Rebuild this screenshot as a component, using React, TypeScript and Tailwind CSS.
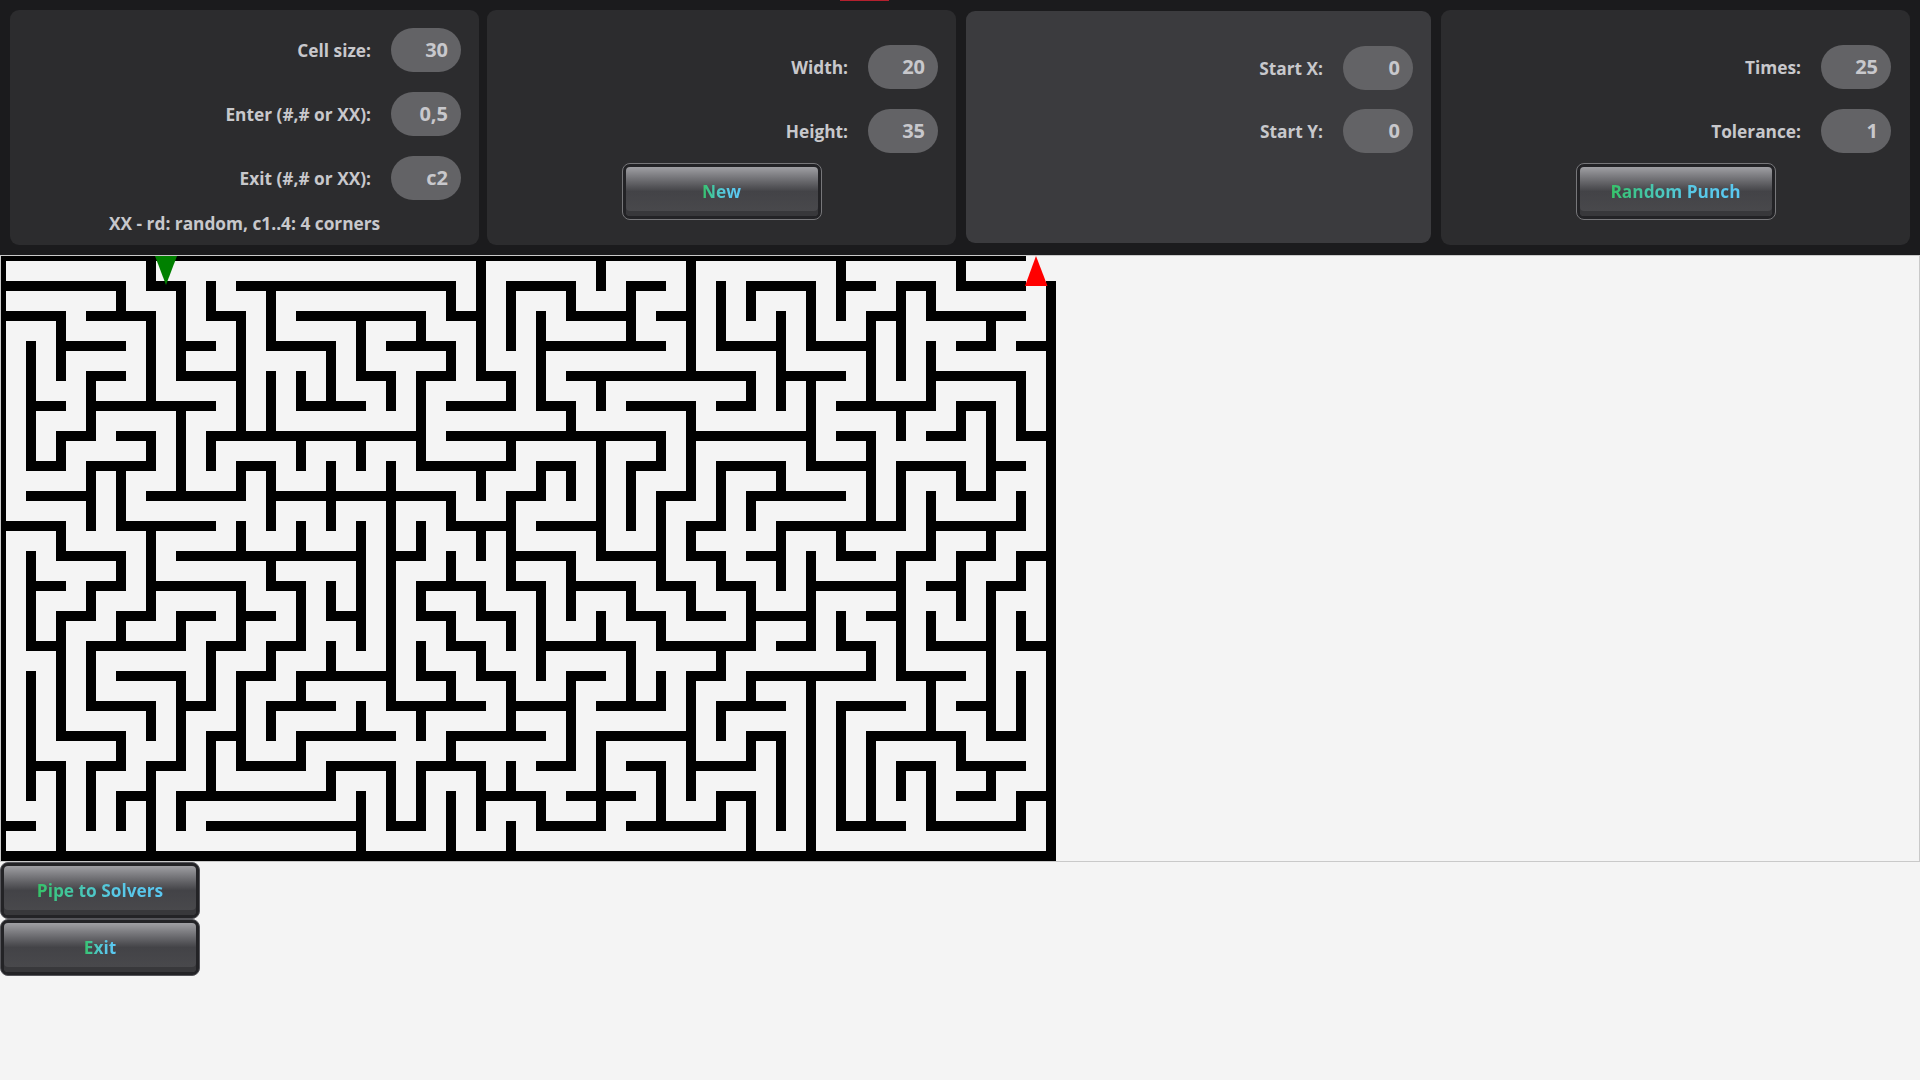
const H: Record<number, string> = {
  0: '0-34',
  1: '0-4 5-6 8-15 17-19 21-22 25-27 28-29 30-31 32-34',
  2: '0-2 3-5 7-8 10-14 15-16 19-21 22-23 29-30 31-34',
  3: '2-4 6-7 9-11 13-15 18-22 24-26 27-29 32-33 34-35',
  4: '3-4 6-8 12-13 14-15 16-17 19-25 26-28 31-34',
  5: '1-2 3-7 10-12 15-17 18-19 21-23 24-25 28-31 32-33',
  6: '2-3 4-5 7-14 15-22 23-27 28-29 31-32 34-35',
  7: '1-2 3-5 8-9 14-17 18-19 21-22 24-26 27-29 30-32 33-34',
  8: '1-3 5-8 9-15 17-18 22-23 25-28 32-33',
  9: '0-2 4-7 15-17 18-20 23-24 26-30 31-34',
  10: '2-4 6-12 13-14 17-19 20-22 23-24 25-26 28-29 30-31 32-33 34-35',
  11: '1-2 3-4 5-8 9-10 14-16 17-18 19-21 22-23 24-25 27-30 31-32 33-34',
  12: '2-3 4-5 6-7 8-9 11-12 14-15 16-17 21-22 23-24 25-27 29-30',
  13: '1-2 3-6 7-8 9-10 15-16 18-21 22-25 26-27 28-29 31-33 34-35',
  14: '4-6 8-9 10-13 14-15 16-17 19-20 23-24 25-29 30-32',
  15: '3-5 6-7 9-11 13-16 17-19 20-22 24-26 28-30 32-33',
  16: '2-4 7-8 10-13 15-18 20-23 25-26 29-32 33-34',
  17: '1-2 3-4 5-6 8-10 11-13 14-16 18-19 21-22 23-25 30-31 32-34',
  18: '4-5 6-11 16-18 19-21 24-25 32-33 34-35',
  19: '0-1 7-12 13-14 18-20 21-24 28-30 31-34',
  20: '0-35',
};

const V: Record<number, string> = {
  0: '0-20',
  1: '3-7 10-13 14-18',
  2: '2-4 6-7 9-10 12-16 17-20',
  3: '4-6 7-9 11-12 13-15 17-19',
  4: '1-2 7-9 10-11 12-13 16-17 18-19',
  5: '0-1 2-5 6-7 9-12 15-16 17-20',
  6: '1-4 5-8 12-13 14-17 18-19',
  7: '1-2 6-7 13-15 16-18',
  8: '2-6 7-8 9-10 11-13 14-17',
  9: '1-3 4-6 7-9 10-11 13-14 15-16',
  10: '4-5 6-7 9-10 11-13 14-15 16-17',
  11: '3-5 7-9 11-12 13-14 17-18',
  12: '2-4 6-7 9-13 15-16 18-20',
  13: '4-5 7-15 17-19',
  14: '2-3 4-7 9-10 11-12 13-14 15-16 17-19',
  15: '1-2 3-4 8-9 10-11 12-13 14-15 16-17 18-20',
  16: '0-4 7-8 9-10 11-12 13-14 17-19',
  17: '1-3 4-5 6-7 8-11 12-13 14-16 17-18 19-20',
  18: '2-5 7-8 11-14 18-19',
  19: '1-2 5-6 7-8 10-12 14-17',
  20: '0-1 4-5 6-10 12-13 16-19',
  21: '1-3 7-9 11-12 13-15',
  22: '6-7 8-11 12-13 14-15 17-19',
  23: '0-4 5-8 9-10 11-12 14-18',
  24: '1-3 7-9 10-11 13-14 15-16 18-19',
  25: '1-2 4-5 8-9 11-13 14-15 16-17 18-20',
  26: '2-5 7-8 9-11 16-19',
  27: '1-3 4-7 10-13 14-20',
  28: '0-2 9-10 12-13 15-19',
  29: '2-5 6-9 13-14 16-19',
  30: '1-4 5-6 7-9 10-14 17-18',
  31: '1-2 3-5 8-10 12-13 14-16 17-19',
  32: '0-1 5-6 7-8 10-12 16-17',
  33: '2-3 5-8 9-10 11-16 17-18',
  34: '4-6 8-9 10-11 12-13 14-16 18-19',
  35: '1-20',
};

const CELL = 30;

const spans = (list: string) => list.split(' ').map((s) => s.split('-').map(Number));

function Maze() {
  return (
    <svg width={1055} height={605} className="block">
      <g stroke="#000" strokeWidth={10} strokeLinecap="square">
        {Object.entries(H).flatMap(([row, list]) =>
          spans(list).map(([a, b]) => (
            <line key={`h${row}-${a}`} x1={a * CELL} x2={b * CELL} y1={+row * CELL} y2={+row * CELL} />
          ))
        )}
        {Object.entries(V).flatMap(([col, list]) =>
          spans(list).map(([a, b]) => (
            <line key={`v${col}-${a}`} x1={+col * CELL} x2={+col * CELL} y1={a * CELL} y2={b * CELL} />
          ))
        )}
      </g>
      <polygon points="154,0 176,0 165,29" fill="#008000" />
      <polygon points="1024,30 1046.5,30 1035,0" fill="#ff0000" />
    </svg>
  );
}

function Field({ label, value }: { label: string; value: string }) {
  return (
    <div className="flex items-center justify-end gap-[20px]">
      <span className="pt-[2px] text-[17.3px] font-bold text-[#c8c8cc]">{label}</span>
      <div className="flex h-[44px] w-[70px] items-center justify-end rounded-[22px] bg-[#636366] pr-[13px] text-[20px] font-bold text-[#c8c8cc]">
        {value}
      </div>
    </div>
  );
}

function GlossButton({ label, light }: { label: string; light?: boolean }) {
  return (
    <button
      className={`block h-[57px] w-[200px] rounded-[8px] border bg-[#232326] p-[3px] ${
        light ? 'border-[#77777a]' : 'border-[#55555a]'
      }`}
    >
      <span className="flex h-full w-full items-center justify-center rounded-[4px] bg-gradient-to-b from-[#a0a0a4] via-[#434347] via-50% to-[#4a4a4d] shadow-[inset_0_-5px_0_#38383b]">
        <span className="bg-gradient-to-r from-[#36c266] via-[#58c8e4] via-60% to-[#5ac8f2] bg-clip-text text-[17.3px] font-bold text-transparent">
          {label}
        </span>
      </span>
    </button>
  );
}

export default function App() {
  return (
    <div className="flex h-[1080px] w-[1920px] flex-col overflow-hidden bg-[#f4f4f4] font-['Open_Sans',sans-serif]">
      <div className="relative flex h-[255px] bg-[#1b1b1d] pl-[10px] pt-[10px]">
        <div className="absolute left-[840px] top-0 h-[1px] w-[49px] bg-[#b4202e]" />

        <div className="flex h-[235px] w-[469px] flex-col rounded-[9px] bg-[#2c2c2e] pr-[18px] pt-[18px]">
          <div className="flex flex-col gap-[20px]">
            <Field label="Cell size:" value="30" />
            <Field label="Enter (#,# or XX):" value="0,5" />
            <Field label="Exit (#,# or XX):" value="c2" />
          </div>
          <div className="mt-[13px] pl-[99px] text-[17.3px] font-bold leading-[22px] text-[#c8c8cc]">
            XX - rd: random, c1..4: 4 corners
          </div>
        </div>

        <div className="ml-[8px] flex h-[235px] w-[469px] flex-col rounded-[9px] bg-[#2c2c2e] pr-[18px] pt-[35px]">
          <div className="flex flex-col gap-[20px]">
            <Field label="Width:" value="20" />
            <Field label="Height:" value="35" />
          </div>
          <div className="mt-[10px] flex justify-center pl-[18px]">
            <GlossButton label="New" light />
          </div>
        </div>

        <div className="ml-[10px] mt-[1px] flex h-[232px] w-[465px] flex-col rounded-[9px] bg-[#3b3b3e] pr-[18px] pt-[35px]">
          <div className="flex flex-col gap-[19px]">
            <Field label="Start X:" value="0" />
            <Field label="Start Y:" value="0" />
          </div>
        </div>

        <div className="ml-[10px] flex h-[235px] w-[469px] flex-col rounded-[9px] bg-[#2c2c2e] pr-[19px] pt-[35px]">
          <div className="flex flex-col gap-[20px]">
            <Field label="Times:" value="25" />
            <Field label="Tolerance:" value="1" />
          </div>
          <div className="mt-[10px] flex justify-center pl-[19px]">
            <GlossButton label="Random Punch" light />
          </div>
        </div>
      </div>

      <div className="h-[607px] border border-[#c9c9c9]">
        <Maze />
      </div>

      <div className="flex flex-col">
        <GlossButton label="Pipe to Solvers" />
        <GlossButton label="Exit" />
      </div>
    </div>
  );
}
